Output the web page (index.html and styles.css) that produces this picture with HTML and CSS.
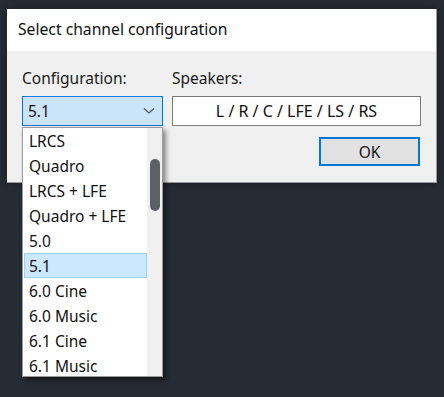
FILE: index.html
```html
<!DOCTYPE html>
<html lang="en">
<head>
    <meta charset="UTF-8">
    <title>Select channel configuration</title>
    <link rel="stylesheet" href="styles.css">
</head>
<body>

<div class="dialog">
    <div class="title-bar">Select channel configuration</div>
    <div class="dialog-body">
        <div class="field config-field">
            <label>Configuration:</label>
            <div class="combo">
                <span>5.1</span>
                <svg class="chevron" width="12" height="8" viewBox="0 0 12 8">
                    <path d="M1 1.5 L6 6 L11 1.5" fill="none" stroke="#555" stroke-width="1.3"/>
                </svg>
            </div>
        </div>
        <div class="field">
            <label>Speakers:</label>
            <div class="speakers">L / R / C / LFE / LS / RS</div>
        </div>
        <div class="buttons">
            <button class="ok-button">OK</button>
        </div>
    </div>
</div>

<div class="dropdown">
    <ul class="options">
        <li>LRCS</li>
        <li>Quadro</li>
        <li>LRCS + LFE</li>
        <li>Quadro + LFE</li>
        <li>5.0</li>
        <li class="selected">5.1</li>
        <li>6.0 Cine</li>
        <li>6.0 Music</li>
        <li>6.1 Cine</li>
        <li>6.1 Music</li>
    </ul>
    <div class="scrollbar">
        <div class="thumb"></div>
    </div>
</div>

</body>
</html>
```

FILE: styles.css
```css
body {
    margin: 0;
    background-color: #262c34;
    font-family: "Noto Sans", "Open Sans", sans-serif;
    font-size: 15.5px;
    color: #111;
    width: 444px;
    height: 397px;
    overflow: hidden;
    position: relative;
}
.dialog {
    margin: 9px 0 0 7px;
    width: 429px;
    height: 173px;
    background-color: #f0f0f0;
    border-right: 1px solid #9a9a9a;
    border-bottom: 1px solid #9a9a9a;
    box-shadow: 0 0 8px rgba(0, 0, 0, 0.35);
}
.title-bar {
    height: 42px;
    line-height: 40px;
    padding-left: 11px;
    background-color: #fff;
    font-size: 15.7px;
}
.dialog-body {
    display: grid;
    grid-template-columns: 141px 249px;
    column-gap: 9px;
    padding: 17px 0 0 15px;
}
.field label {
    display: block;
    height: 20px;
    line-height: 20px;
    margin-bottom: 8px;
    color: #1a1a1a;
}
.combo {
    box-sizing: border-box;
    height: 30px;
    display: flex;
    align-items: center;
    justify-content: space-between;
    padding: 0 7px 0 5px;
    background-color: #cce4f7;
    border: 1px solid #0078d7;
}
.speakers {
    box-sizing: border-box;
    height: 30px;
    line-height: 28px;
    text-align: center;
    font-size: 16px;
    background-color: #fff;
    border: 1px solid #7a7a7a;
}
.buttons {
    grid-column: 2;
    display: flex;
    justify-content: flex-end;
    padding-top: 11px;
    padding-right: 1px;
}
.ok-button {
    box-sizing: border-box;
    width: 101px;
    height: 29px;
    font-family: inherit;
    font-size: 15.5px;
    color: #111;
    background-color: #e1e1e1;
    border: 2px solid #0078d7;
    padding: 0;
}
.dropdown {
    position: absolute;
    left: 22px;
    top: 127px;
    width: 141px;
    height: 250px;
    box-sizing: border-box;
    display: flex;
    background-color: #fff;
    border: 1px solid #9a9a9a;
    box-shadow: 3px 3px 5px rgba(0, 0, 0, 0.45);
}
.options {
    list-style: none;
    margin: 0;
    padding: 0 0 0 1px;
    flex: 1;
}
.options li {
    box-sizing: border-box;
    height: 25px;
    line-height: 24px;
    padding-left: 4px;
    border: 1px solid transparent;
}
.options li.selected {
    background-color: #cce8ff;
    border-color: #99d1ff;
}
.scrollbar {
    width: 15px;
    background-color: #f0f0f0;
    position: relative;
}
.thumb {
    position: absolute;
    left: 3px;
    top: 31px;
    width: 10px;
    height: 52px;
    border-radius: 5px;
    background-color: #5d6066;
}
```
